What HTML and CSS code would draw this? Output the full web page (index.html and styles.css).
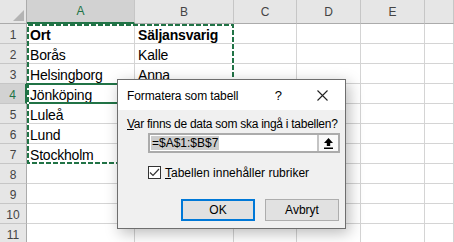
FILE: index.html
```html
<!DOCTYPE html>
<html lang="sv">
<head>
  <meta charset="UTF-8" />
  <title>Formatera som tabell</title>
  <link rel="stylesheet" href="styles.css">
</head>
<body>
  <div class="sheet">
    <div class="corner">
      <svg width="11" height="11" viewBox="0 0 11 11"><polygon points="11,0 11,11 0,11" fill="#b4b4b4"/></svg>
    </div>
    <div class="col aktiv-col">A</div>
    <div class="col">B</div>
    <div class="col">C</div>
    <div class="col">D</div>
    <div class="col">E</div>
    <div class="col"></div>

    <div class="row">1</div><div class="cell fet">Ort</div><div class="cell fet">Säljansvarig</div><div class="cell"></div><div class="cell"></div><div class="cell"></div><div class="cell"></div>
    <div class="row">2</div><div class="cell">Borås</div><div class="cell">Kalle</div><div class="cell"></div><div class="cell"></div><div class="cell"></div><div class="cell"></div>
    <div class="row">3</div><div class="cell">Helsingborg</div><div class="cell">Anna</div><div class="cell"></div><div class="cell"></div><div class="cell"></div><div class="cell"></div>
    <div class="row aktiv-row">4</div><div class="cell vald">Jönköping</div><div class="cell"></div><div class="cell"></div><div class="cell"></div><div class="cell"></div><div class="cell"></div>
    <div class="row">5</div><div class="cell">Luleå</div><div class="cell"></div><div class="cell"></div><div class="cell"></div><div class="cell"></div><div class="cell"></div>
    <div class="row">6</div><div class="cell">Lund</div><div class="cell"></div><div class="cell"></div><div class="cell"></div><div class="cell"></div><div class="cell"></div>
    <div class="row">7</div><div class="cell">Stockholm</div><div class="cell"></div><div class="cell"></div><div class="cell"></div><div class="cell"></div><div class="cell"></div>
    <div class="row">8</div><div class="cell"></div><div class="cell"></div><div class="cell"></div><div class="cell"></div><div class="cell"></div><div class="cell"></div>
    <div class="row">9</div><div class="cell"></div><div class="cell"></div><div class="cell"></div><div class="cell"></div><div class="cell"></div><div class="cell"></div>
    <div class="row">10</div><div class="cell"></div><div class="cell"></div><div class="cell"></div><div class="cell"></div><div class="cell"></div><div class="cell"></div>
    <div class="row">11</div><div class="cell"></div><div class="cell"></div><div class="cell"></div><div class="cell"></div><div class="cell"></div><div class="cell"></div>

    <svg class="myror" width="207" height="140" viewBox="0 0 207 140">
      <rect x="1" y="1" width="205" height="138" fill="none" stroke="#fff" stroke-width="2"/>
      <rect x="1" y="1" width="205" height="138" fill="none" stroke="#217346" stroke-width="2" stroke-dasharray="5 2"/>
    </svg>
  </div>

  <div class="dialog">
    <div class="titel">
      <span class="titel-text">Formatera som tabell</span>
      <span class="hjalp">?</span>
      <svg class="stang" width="11" height="11" viewBox="0 0 11 11">
        <path d="M0.5 0.5 L10.5 10.5 M10.5 0.5 L0.5 10.5" stroke="#222" stroke-width="1.1"/>
      </svg>
    </div>
    <div class="innehall">
      <p class="fraga"><u>V</u>ar finns de data som ska ingå i tabellen?</p>
      <div class="refruta">
        <span class="reftext"><span class="markerad">=$A$1:$B$7</span></span>
        <span class="refknapp">
          <svg width="9" height="11" viewBox="0 0 9 11">
            <path d="M4.5 0 L9 5 H6.2 V8 H2.8 V5 H0 Z" fill="#000"/>
            <rect x="0" y="9.5" width="9" height="1.5" fill="#000"/>
          </svg>
        </span>
      </div>
      <label class="kryss">
        <span class="ruta">
          <svg width="11" height="11" viewBox="0 0 11 11"><path d="M1 5.5 L4 8.5 L10 2" fill="none" stroke="#333" stroke-width="1.2"/></svg>
        </span>
        <span><u>T</u>abellen innehåller rubriker</span>
      </label>
      <div class="knappar">
        <button class="knapp standard">OK</button>
        <button class="knapp">Avbryt</button>
      </div>
    </div>
  </div>
</body>
</html>
```

FILE: styles.css
```css
body {
  margin: 0;
  font-family: "Liberation Sans", Arial, sans-serif;
  background: #fff;
  overflow: hidden;
  height: 242px;
  position: relative;
}

.sheet {
  display: grid;
  grid-template-columns: 27px 108px 99px 63px 64px 64px 29px;
  grid-template-rows: 24px;
  grid-auto-rows: 20px;
  position: relative;
}

.corner {
  background: #e6e6e6;
  border-right: 1px solid #ababab;
  border-bottom: 1px solid #ababab;
  box-sizing: border-box;
  display: flex;
  align-items: flex-end;
  justify-content: flex-end;
  padding: 0 2px 2px 0;
}

.col {
  background: #e6e6e6;
  border-right: 1px solid #c6c6c6;
  border-bottom: 1px solid #ababab;
  box-sizing: border-box;
  text-align: center;
  color: #444;
  font-size: 12px;
  line-height: 24px;
}

.aktiv-col {
  background: #d2d2d2;
  border-bottom: 2px solid #217346;
  color: #217346;
  line-height: 23px;
}

.row {
  background: #e6e6e6;
  border-right: 1px solid #ababab;
  border-bottom: 1px solid #c6c6c6;
  box-sizing: border-box;
  text-align: center;
  color: #444;
  font-size: 12px;
  line-height: 20px;
  padding-top: 1px;
}

.aktiv-row {
  background: #d2d2d2;
  border-right: 2px solid #217346;
  color: #217346;
}

.cell {
  border-right: 1px solid #d4d4d4;
  border-bottom: 1px solid #d4d4d4;
  box-sizing: border-box;
  font-size: 14px;
  letter-spacing: -0.2px;
  line-height: 20px;
  padding: 1px 0 0 3px;
  white-space: nowrap;
  overflow: hidden;
  color: #000;
}

.fet { font-weight: bold; }

.vald {
  position: relative;
  overflow: visible;
}

.vald::after {
  content: "";
  position: absolute;
  top: -1px;
  left: -1px;
  right: 0;
  bottom: -1px;
  border: 2px solid #217346;
}

.myror {
  position: absolute;
  left: 27px;
  top: 24px;
}

.dialog {
  position: absolute;
  left: 117px;
  top: 79px;
  width: 229px;
  height: 150px;
  box-sizing: border-box;
  border: 1px solid #6e6e6e;
  background: #f0f0f0;
  box-shadow: 3px 4px 14px rgba(0, 0, 0, 0.28);
  font-size: 12px;
  color: #000;
  display: flex;
  flex-direction: column;
}

.titel {
  background: #fff;
  height: 30px;
  display: flex;
  align-items: center;
  padding: 1px 0 0 9px;
  box-sizing: border-box;
}

.titel-text {
  flex: 1;
  letter-spacing: -0.1px;
}

.hjalp {
  font-size: 13px;
  margin-right: 35px;
}

.stang {
  margin-right: 17px;
}

.innehall {
  flex: 1;
  padding: 6px 6px 0 9px;
  display: flex;
  flex-direction: column;
}

.fraga {
  margin: 0;
  line-height: 16px;
  letter-spacing: -0.27px;
  white-space: nowrap;
}

.refruta {
  margin: 1px 0 0 21px;
  width: 192px;
  height: 20px;
  box-sizing: border-box;
  border: 2px solid #ababab;
  background: #fff;
  display: flex;
}

.reftext {
  flex: 1;
  line-height: 16px;
  padding-left: 1px;
}

.markerad {
  background: #cccccc;
  padding: 0 1px;
}

.refknapp {
  width: 19px;
  border-left: 2px solid #c4c4c4;
  background: #f9f9f9;
  display: flex;
  align-items: center;
  justify-content: center;
}

.kryss {
  margin: 13px 0 0 21px;
  display: flex;
  align-items: center;
  gap: 4px;
  height: 13px;
  white-space: nowrap;
}

.ruta {
  width: 13px;
  height: 13px;
  box-sizing: border-box;
  border: 1px solid #333;
  background: #fff;
  display: flex;
  align-items: center;
  justify-content: center;
}

.knappar {
  margin-top: 20px;
  display: flex;
  justify-content: flex-end;
  gap: 10px;
}

.knapp {
  width: 74px;
  height: 22px;
  box-sizing: border-box;
  border: 1px solid #adadad;
  background: #e1e1e1;
  font-family: "Liberation Sans", Arial, sans-serif;
  font-size: 12px;
  color: #000;
  padding: 0;
}

.standard {
  border: 2px solid #0078d7;
}
```
